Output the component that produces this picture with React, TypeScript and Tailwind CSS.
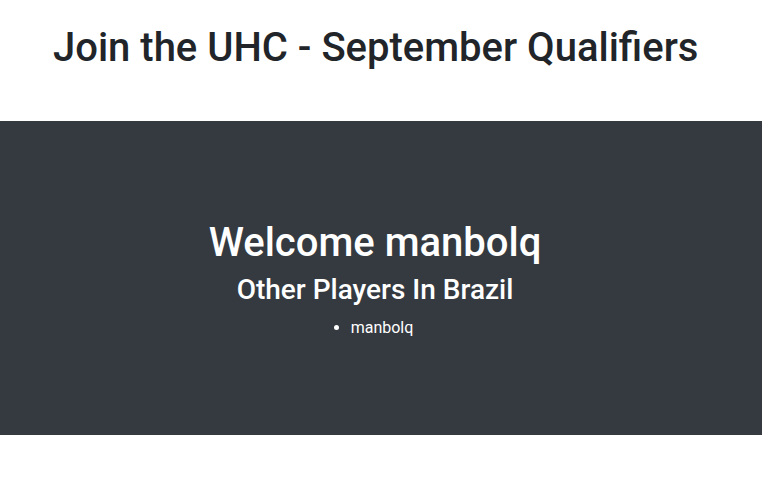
export default function App() {
  return (
    <div className="min-h-screen bg-white font-['Roboto',sans-serif]">
      <header className="h-[121px] pl-[53px] pt-[24px]">
        <h1 className="text-[40px] font-medium leading-[1.2] text-[#212529]">
          Join the UHC - September Qualifiers
        </h1>
      </header>

      <section className="flex h-[314px] flex-col items-center justify-center bg-[#343a40] pr-[12px] pt-[3px] text-white">
        <h1 className="text-[40px] font-medium leading-[1.2]">Welcome manbolq</h1>
        <h2 className="mt-[6px] text-[28px] font-medium leading-[1.2]">Other Players In Brazil</h2>
        <ul className="mt-[9px] list-disc pl-[14px] text-base leading-6">
          <li>manbolq</li>
        </ul>
      </section>
    </div>
  );
}
